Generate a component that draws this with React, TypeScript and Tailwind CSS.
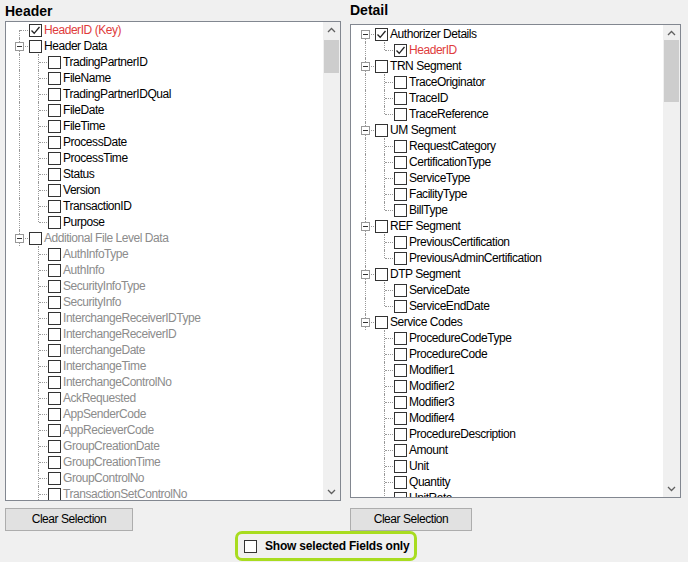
import React from "react";

type Node = { t: string; checked?: boolean; red?: boolean; gray?: boolean; kids?: Node[] };

const left: Node[] = [
  { t: "HeaderID (Key)", checked: true, red: true },
  { t: "Header Data", kids: ["TradingPartnerID","FileName","TradingPartnerIDQual","FileDate","FileTime","ProcessDate","ProcessTime","Status","Version","TransactionID","Purpose"].map(t => ({ t })) },
  { t: "Additional File Level Data", gray: true, kids: ["AuthInfoType","AuthInfo","SecurityInfoType","SecurityInfo","InterchangeReceiverIDType","InterchangeReceiverID","InterchangeDate","InterchangeTime","InterchangeControlNo","AckRequested","AppSenderCode","AppRecieverCode","GroupCreationDate","GroupCreationTime","GroupControlNo","TransactionSetControlNo","FunctionalIDCode"].map(t => ({ t, gray: true })) },
];

const right: Node[] = [
  { t: "Authorizer Details", checked: true, kids: [{ t: "HeaderID", checked: true, red: true }] },
  { t: "TRN Segment", kids: ["TraceOriginator","TraceID","TraceReference"].map(t => ({ t })) },
  { t: "UM Segment", kids: ["RequestCategory","CertificationType","ServiceType","FacilityType","BillType"].map(t => ({ t })) },
  { t: "REF Segment", kids: ["PreviousCertification","PreviousAdminCertification"].map(t => ({ t })) },
  { t: "DTP Segment", kids: ["ServiceDate","ServiceEndDate"].map(t => ({ t })) },
  { t: "Service Codes", kids: ["ProcedureCodeType","ProcedureCode","Modifier1","Modifier2","Modifier3","Modifier4","ProcedureDescription","Amount","Unit","Quantity","UnitRate","LineNote"].map(t => ({ t })) },
];

const Check = ({ on }: { on?: boolean }) => (
  <span className="relative w-[13px] h-[13px] border border-[#333] bg-white shrink-0">
    {on && (
      <svg className="absolute left-0 top-0" width="11" height="11" viewBox="0 0 11 11">
        <path d="M1.5 5.5 L4.2 8.3 L9.5 2" fill="none" stroke="#222" strokeWidth="1.3" />
      </svg>
    )}
  </span>
);

const VLine = ({ half }: { half?: "top" | "bottom" }) => (
  <span
    className={
      "absolute left-[9px] border-l border-dotted border-[#999] " +
      (half === "top" ? "top-0 h-[8px]" : half === "bottom" ? "top-[8px] h-[8px]" : "top-0 h-[16px]")
    }
  />
);
const HLine = () => <span className="absolute left-[10px] top-[8px] w-[8px] border-t border-dotted border-[#999]" />;

const Row = ({ n, level, first, lastRoot, lastKid, hasKids }: { n: Node; level: number; first?: boolean; lastRoot?: boolean; lastKid?: boolean; hasKids?: boolean }) => (
  <div className="flex items-center h-[16px]">
    {level === 0 ? (
      <span className="relative w-[19px] h-[16px] shrink-0">
        <VLine half={first ? "bottom" : lastRoot ? "top" : undefined} />
        <HLine />
        {hasKids && (
          <span className="absolute left-[5px] top-[4px] w-[9px] h-[9px] border border-[#999] bg-white flex items-center justify-center">
            <span className="w-[5px] border-t border-[#333]" />
          </span>
        )}
      </span>
    ) : (
      <>
        <span className="relative w-[19px] h-[16px] shrink-0">{!lastRoot && <VLine />}</span>
        <span className="relative w-[19px] h-[16px] shrink-0">
          <VLine half={lastKid ? "top" : undefined} />
          <HLine />
        </span>
      </>
    )}
    <Check on={n.checked} />
    <span className={"ml-[2px] whitespace-nowrap " + (n.red ? "text-[#e03c3c]" : n.gray ? "text-[#8c8c8c]" : "text-black")}>{n.t}</span>
  </div>
);

const Tree = ({ nodes }: { nodes: Node[] }) => (
  <div>
    {nodes.map((n, i) => (
      <React.Fragment key={i}>
        <Row n={n} level={0} first={i === 0} lastRoot={i === nodes.length - 1 && !n.kids} hasKids={!!n.kids} />
        {n.kids?.map((k, j) => (
          <Row key={j} n={k} level={1} lastRoot={i === nodes.length - 1} lastKid={j === n.kids!.length - 1} />
        ))}
      </React.Fragment>
    ))}
  </div>
);

const Scrollbar = ({ thumbTop, thumbH }: { thumbTop: number; thumbH: number }) => (
  <div className="absolute right-0 top-0 bottom-0 w-[17px] bg-[#f0f0f0]">
    <svg className="absolute left-[4px] top-[5px]" width="9" height="6" viewBox="0 0 9 6"><path d="M1 5 L4.5 1.5 L8 5" fill="none" stroke="#606060" strokeWidth="1.3" /></svg>
    <div className="absolute left-[1px] w-[15px] bg-[#cdcdcd]" style={{ top: thumbTop, height: thumbH }} />
    <svg className="absolute left-[4px] bottom-[5px]" width="9" height="6" viewBox="0 0 9 6"><path d="M1 1 L4.5 4.5 L8 1" fill="none" stroke="#606060" strokeWidth="1.3" /></svg>
  </div>
);

export default function App() {
  return (
    <div className="w-[688px] h-[562px] bg-[#f0f0f0] relative overflow-hidden text-[12px] tracking-[-0.45px]" style={{ fontFamily: '"Liberation Sans", Arial, sans-serif' }}>
      <div className="flex gap-[9px] pl-[5px]">
        <div className="flex flex-col w-[336px]">
          <div className="h-[21px] pt-[2px] font-bold text-[14px] tracking-normal leading-[18px]">Header</div>
          <div className="relative h-[480px] border border-[#828790] bg-white overflow-hidden">
            <div className="pl-[4px]"><Tree nodes={left} /></div>
            <Scrollbar thumbTop={18} thumbH={33} />
          </div>
          <button className="mt-[7px] w-[128px] h-[23px] border border-[#adadad] bg-[#e1e1e1] text-[12px] leading-[21px]">Clear Selection</button>
        </div>
        <div className="flex flex-col w-[331px]">
          <div className="h-[24px] font-bold text-[14px] tracking-normal leading-[20px]">Detail</div>
          <div className="relative h-[474px] border border-[#828790] bg-white overflow-hidden">
            <div className="pt-[1px] pl-[5px]"><Tree nodes={right} /></div>
            <Scrollbar thumbTop={15} thumbH={62} />
          </div>
          <button className="mt-[10px] w-[122px] h-[23px] border border-[#adadad] bg-[#e1e1e1] text-[12px] leading-[21px]">Clear Selection</button>
        </div>
      </div>
      <div className="absolute left-[235px] top-[531px] w-[182px] h-[30px] border-[3px] border-[#a8dc20] rounded-[7px] flex items-center pl-[6px] gap-[8px]">
        <span className="w-[13px] h-[13px] border border-[#333] bg-white" />
        <span className="font-bold text-[12px] tracking-[-0.2px]">Show selected Fields only</span>
      </div>
    </div>
  );
}
